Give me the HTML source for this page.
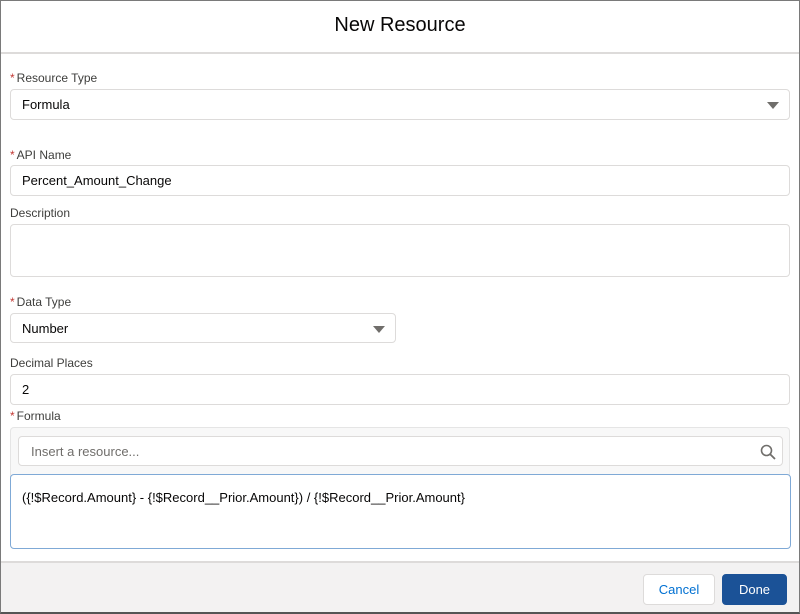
<!DOCTYPE html>
<html><head><style>
*{box-sizing:border-box;margin:0;padding:0}
body{width:800px;height:614px;background:#fff;font-family:"Liberation Sans",sans-serif;color:#080707;position:relative;overflow:hidden}
.frame{position:absolute;inset:0;border:1px solid #7a7a7a;border-bottom:2px solid #555}
.hdr{position:absolute;left:1px;right:1px;top:0;height:54px;border-bottom:2px solid #dddbda;text-align:center;font-size:20px;line-height:50px;color:#080707}
.lbl{position:absolute;left:10px;font-size:12px;color:#3e3e3c}
.lbl b{color:#c23934;font-weight:normal;margin-right:2px}
.box{position:absolute;border:1px solid #dddbda;border-radius:4px;background:#fff;font-size:13px;padding-left:11px;display:flex;align-items:center}
.arrow{position:absolute;right:10px;top:12px;width:0;height:0;border-left:6px solid transparent;border-right:6px solid transparent;border-top:7px solid #706e6b}
.foot{position:absolute;left:1px;right:1px;top:561px;bottom:2px;background:#f3f2f2;border-top:2px solid #dddbda}
.btn{position:absolute;top:574px;height:31px;border-radius:4px;font-size:13px;display:flex;align-items:center;justify-content:center}
</style></head><body>
<div class="hdr">New Resource</div>
<div class="lbl" style="top:71px"><b>*</b>Resource Type</div>
<div class="box" style="left:10px;top:89px;width:780px;height:31px">Formula<span class="arrow"></span></div>
<div class="lbl" style="top:148px"><b>*</b>API Name</div>
<div class="box" style="left:10px;top:165px;width:780px;height:31px">Percent_Amount_Change</div>
<div class="lbl" style="top:206px">Description</div>
<div class="box" style="left:10px;top:224px;width:780px;height:53px"></div>
<div class="lbl" style="top:295px"><b>*</b>Data Type</div>
<div class="box" style="left:10px;top:313px;width:386px;height:30px">Number<span class="arrow"></span></div>
<div class="lbl" style="top:356px">Decimal Places</div>
<div class="box" style="left:10px;top:374px;width:780px;height:31px">2</div>
<div class="lbl" style="top:409px"><b>*</b>Formula</div>
<div style="position:absolute;left:10px;top:427px;width:780px;height:50px;background:#f8f8f8;border:1px solid #e5e5e5;border-bottom:none;border-radius:4px 4px 0 0"></div>
<div class="box" style="left:18px;top:436px;width:765px;height:30px;color:#706e6b;padding-left:12px">Insert a resource...
<svg style="position:absolute;right:6px;top:7px" width="16" height="16" viewBox="0 0 16 16"><circle cx="6.5" cy="6.5" r="5" fill="none" stroke="#706e6b" stroke-width="1.6"/><path d="M10.2 10.2L15 15" stroke="#706e6b" stroke-width="1.8"/></svg></div>
<div class="box" style="left:10px;top:474px;width:781px;height:75px;border-color:#7fa9d6;align-items:flex-start;padding-top:15px">({!$Record.Amount} - {!$Record__Prior.Amount}) / {!$Record__Prior.Amount}</div>
<div class="foot"></div>
<div class="btn" style="left:643px;width:72px;background:#fff;border:1px solid #dddbda;color:#0070d2">Cancel</div>
<div class="btn" style="left:722px;width:65px;background:#1b5297;color:#fff;border:1px solid #1b5297">Done</div>
<div class="frame"></div>
</body></html>
